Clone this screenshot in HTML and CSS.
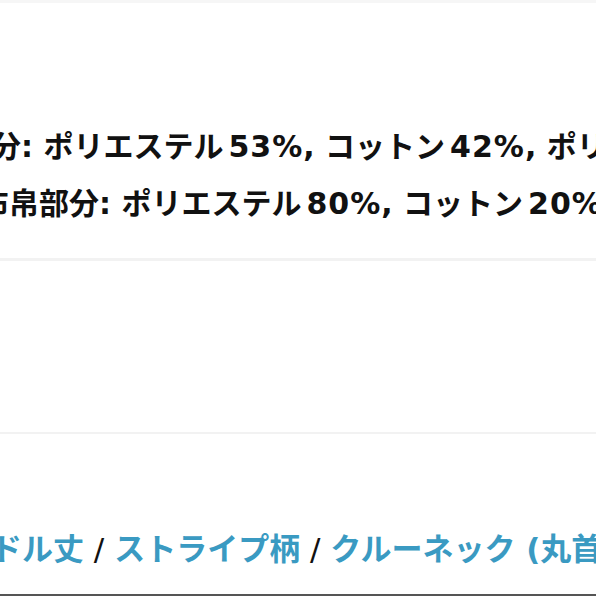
FILE: index.html
```html
<!DOCTYPE html>
<html lang="ja">
<head>
<meta charset="utf-8">
<title>商品詳細</title>
<link rel="stylesheet" href="styles.css">
</head>
<body>
<div class="page">
  <div class="topbar"></div>
  <section class="materials">
    <p class="row row-body">身頃部分: ポリエステル<span class="num">53%</span>, コットン<span class="num">42%</span>, ポリウレタン<span class="num">5%</span></p>
    <p class="row row-woven">袖・裾布帛部分: ポリエステル<span class="num">80%</span>, コットン<span class="num">20%</span></p>
  </section>
  <section class="blank"></section>
  <section class="tags">
    <p class="tag-row"><a class="tag" href="#">ミドル丈</a> / <a class="tag" href="#">ストライプ柄</a> / <a class="tag" href="#">クルーネック (丸首)</a></p>
  </section>
</div>
</body>
</html>
```

FILE: styles.css
```css
html, body {
  margin: 0;
  padding: 0;
  background: #ffffff;
}
body {
  width: 596px;
  height: 596px;
  overflow: hidden;
  font-family: "DejaVu Sans", "Noto Sans CJK JP", sans-serif;
  color: #111111;
}
.page {
  display: flex;
  flex-direction: column;
  width: 596px;
}
.topbar {
  height: 3px;
  background: #f6f6f6;
}
.materials {
  padding: 115px 0 26px;
  border-bottom: 3px solid #f2f2f2;
}
.row {
  margin: 0;
  font-size: 30px;
  font-weight: 600;
  line-height: 57px;
  white-space: nowrap;
}
.row-body {
  margin-left: -99px;
}
.row-woven {
  margin-left: -111px;
}
.num {
  margin-left: 5px;
  letter-spacing: 1px;
}
.blank {
  height: 171px;
  border-bottom: 2px solid #f2f2f2;
}
.tags {
  padding: 95px 0 25px;
  border-bottom: 2px solid #555555;
}
.tag-row {
  margin: 0 0 0 -40px;
  font-size: 31px;
  font-weight: 400;
  line-height: 40px;
  white-space: nowrap;
  color: #111111;
}
.tag {
  color: #3a9ac2;
  font-weight: 600;
  text-decoration: none;
}
```
